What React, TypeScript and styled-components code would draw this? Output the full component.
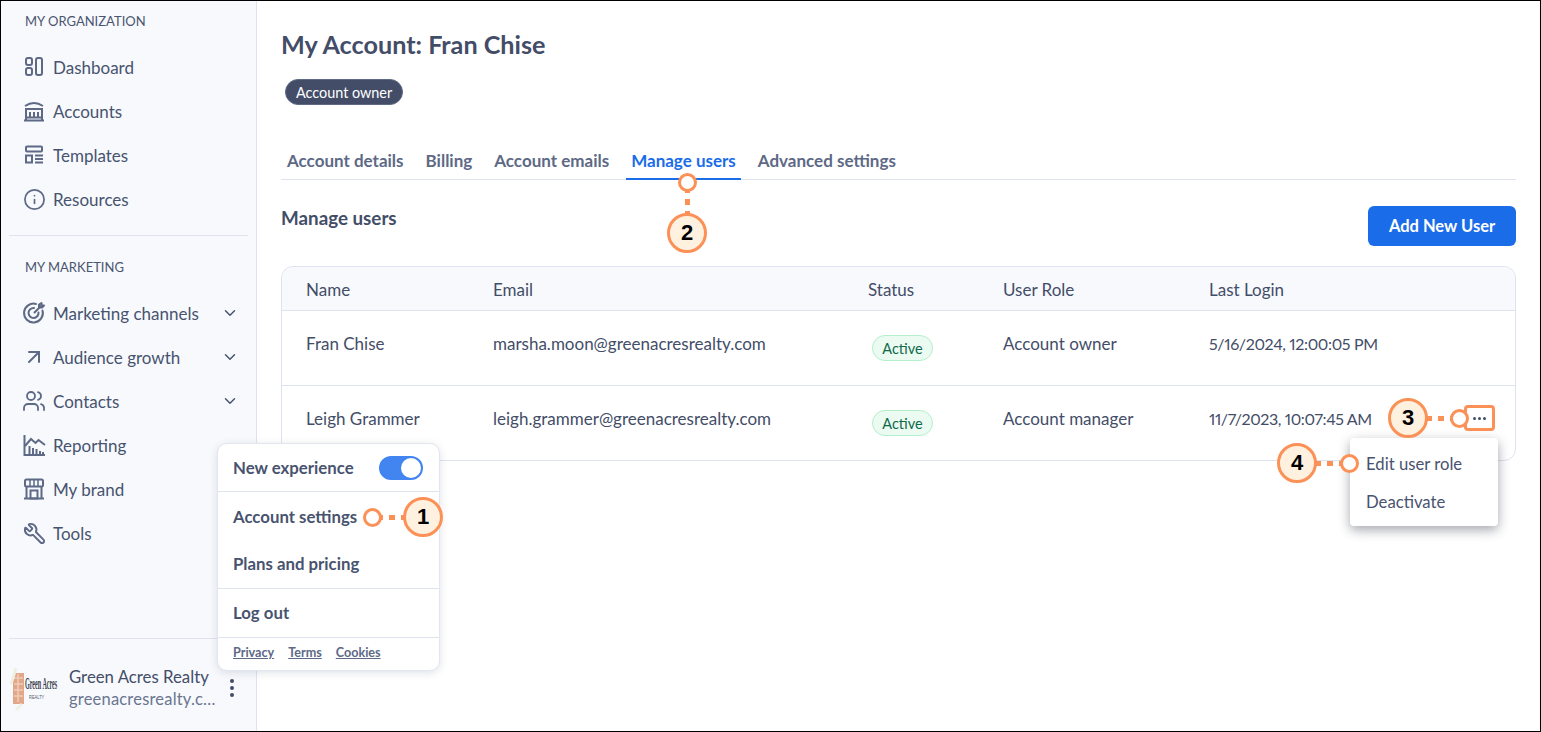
import styled, { createGlobalStyle } from "styled-components";
import { ArrowUpRight, ChevronDown, Info, Users, Wrench } from "lucide-react";
import type { ReactNode } from "react";

const GlobalStyle = createGlobalStyle`
  * { box-sizing: border-box; }
  html, body { margin: 0; padding: 0; background: #fff; }
  body { font-family: "Lato", "Open Sans", sans-serif; color: #434d68; }
`;

const Page = styled.div`
  position: relative;
  display: flex;
  width: 1541px;
  height: 732px;
  border: 1px solid #000;
  overflow: hidden;
  background: #fff;
`;

/* sidebar */
const Sidebar = styled.aside`
  display: flex;
  flex-direction: column;
  flex: 0 0 256px;
  background: #f7f9fd;
  border-right: 1px solid #dfe3ef;
`;

const SectionLabel = styled.div<{ $top: number }>`
  padding: ${(p) => p.$top}px 0 0 24px;
  height: ${(p) => p.$top + 18}px;
  margin-bottom: 15px;
  font-size: 13px;
  line-height: 18px;
  color: #4a5570;
`;

const NavList = styled.nav`
  display: flex;
  flex-direction: column;
`;

const NavItem = styled.div`
  display: flex;
  align-items: center;
  height: 44px;
  padding: 0 16px 0 21px;
  font-size: 17px;
  color: #48536f;
`;

const NavIcon = styled.span`
  display: flex;
  align-items: center;
  justify-content: center;
  width: 24px;
  height: 24px;
  margin-right: 7px;
  color: #5d6985;
`;

const NavText = styled.span`
  flex: 1;
`;

const NavChevron = styled(ChevronDown)`
  width: 18px;
  height: 18px;
  margin-right: 1px;
  color: #48536f;
`;

const ToolsWrench = styled(Wrench)`
  transform: scaleX(-1);
`;

const SideDivider = styled.hr`
  margin: 14px 8px 0 8px;
  border: 0;
  border-top: 1px solid #dfe3ef;
`;

const SideFooter = styled.div`
  display: flex;
  align-items: center;
  margin: auto 8px 0 8px;
  height: 93px;
  padding: 6px 0 0 1px;
  border-top: 1px solid #dfe3ef;
`;

const BrandLogo = styled.svg`
  flex: 0 0 48px;
  width: 48px;
  height: 48px;
`;

const BrandText = styled.div`
  margin-left: 11px;
  width: 149px;
  min-width: 0;
`;

const BrandName = styled.div`
  font-size: 16.8px;
  line-height: 23px;
  color: #434d68;
  white-space: nowrap;
`;

const BrandSite = styled.div`
  font-size: 16.5px;
  line-height: 23px;
  letter-spacing: 0.2px;
  color: #6a7590;
  white-space: nowrap;
  overflow: hidden;
  text-overflow: ellipsis;
`;

const Kebab = styled.span`
  display: flex;
  flex-direction: column;
  gap: 3px;
  margin-left: 12px;
  span {
    width: 4px;
    height: 4px;
    border-radius: 50%;
    background: #434d68;
  }
`;

/* main column */
const Main = styled.main`
  flex: 1;
  min-width: 0;
  padding: 0 24px;
`;

const Title = styled.h1`
  margin: 27px 0 0 0;
  font-size: 25.2px;
  line-height: 32px;
  font-weight: 700;
  color: #434d68;
`;

const OwnerPill = styled.div`
  display: inline-flex;
  align-items: center;
  height: 26px;
  margin: 19px 0 0 4px;
  padding: 0 10px;
  border-radius: 13px;
  background: #434d68;
  border: 1px solid #5d6985;
  color: #fff;
  font-size: 14.4px;
`;

const Tabs = styled.div`
  display: flex;
  gap: 12px;
  height: 36px;
  margin-top: 39px;
  padding-left: 1px;
  border-bottom: 1px solid #dfe3ef;
`;

const Tab = styled.div<{ $active?: boolean }>`
  height: 36px;
  padding: 5px 5px 0 5px;
  font-size: 17px;
  line-height: 24px;
  font-weight: 700;
  white-space: nowrap;
  color: ${(p) => (p.$active ? "#1a6ce8" : "#5d6985")};
  border-bottom: 2px solid ${(p) => (p.$active ? "#1a6ce8" : "transparent")};
`;

const SectionHead = styled.div`
  display: flex;
  justify-content: space-between;
  align-items: flex-start;
  margin-top: 26px;
  height: 60px;
`;

const SectionTitle = styled.h2`
  margin: 0;
  font-size: 18.8px;
  line-height: 24px;
  font-weight: 700;
  color: #434d68;
`;

const PrimaryButton = styled.button`
  width: 148px;
  height: 40px;
  border: 0;
  border-radius: 6px;
  background: #1a6ce8;
  color: #fff;
  font-family: inherit;
  font-size: 16.5px;
  font-weight: 700;
`;

const TableCard = styled.div`
  height: 195px;
  border: 1px solid #dfe3ef;
  border-radius: 12px;
`;

const TableRow = styled.div<{ $head?: boolean }>`
  display: grid;
  grid-template-columns: 187px 375px 135px 206px 1fr;
  align-items: center;
  height: ${(p) => (p.$head ? "44px" : "75px")};
  padding-left: 24px;
  border-bottom: 1px solid #dfe3ef;
  background: ${(p) => (p.$head ? "#f7f9fd" : "transparent")};
  border-radius: ${(p) => (p.$head ? "12px 12px 0 0" : "0")};
  &:last-child { border-bottom: 0; height: 74px; }
`;

const HeadCell = styled.div`
  padding-top: 1px;
  font-size: 17px;
  color: #434d68;
`;

const Cell = styled.div`
  padding-bottom: 10px;
  font-size: 17px;
  color: #434d68;
  white-space: nowrap;
`;

const StatusCell = styled.div`
  padding-left: 4px;
`;

const StatusBadge = styled.span`
  display: inline-flex;
  align-items: center;
  justify-content: center;
  width: 61px;
  height: 26px;
  border-radius: 13px;
  background: #ecfbf2;
  border: 1px solid #b3efcb;
  color: #0f6a4a;
  font-size: 14.5px;
`;

const DateCell = styled(Cell)<{ $track: number }>`
  font-size: 16px;
  font-feature-settings: "pnum" 1;
  letter-spacing: ${(p) => p.$track}px;
`;

const LoginCell = styled(DateCell)`
  display: flex;
  align-items: center;
  justify-content: space-between;
  padding-right: 20px;
`;

const ActionAnchor = styled.div`
  position: relative;
  width: 31px;
  height: 26px;
`;

const MoreButton = styled.div`
  display: flex;
  align-items: center;
  justify-content: center;
  gap: 2px;
  width: 31px;
  height: 26px;
  border: 3px solid #fb9157;
  border-radius: 4px;
  background: #fff;
  span {
    width: 3px;
    height: 3px;
    border-radius: 50%;
    background: #434d68;
  }
`;

const RowMenu = styled.div`
  position: absolute;
  top: 33px;
  right: -3px;
  width: 148px;
  height: 88px;
  padding: 7px 0 0 16px;
  border-radius: 4px;
  background: #fff;
  box-shadow: 0 4px 12px rgba(30, 35, 50, 0.4);
  letter-spacing: 0;
`;

const RowMenuItem = styled.div`
  height: 38px;
  line-height: 38px;
  font-size: 16.7px;
  color: #48536f;
`;

/* account popover */
const Popover = styled.div`
  position: absolute;
  left: 216px;
  top: 442px;
  width: 223px;
  height: 228px;
  border: 1px solid #e3e6f0;
  border-radius: 10px;
  background: #fff;
  box-shadow: 0 2px 8px rgba(50, 60, 90, 0.15);
`;

const PopRow = styled.div<{ $h: number; $line?: boolean; $lift?: boolean }>`
  display: flex;
  align-items: center;
  justify-content: space-between;
  height: ${(p) => p.$h}px;
  padding: 0 16px ${(p) => (p.$lift ? "2px" : "0")} 15px;
  font-size: 16.8px;
  font-weight: 700;
  color: #48536f;
  border-bottom: ${(p) => (p.$line ? "1px solid #dfe3ef" : "0")};
`;

const Toggle = styled.span`
  display: flex;
  justify-content: flex-end;
  align-items: center;
  width: 44px;
  height: 24px;
  padding: 2px;
  border-radius: 12px;
  background: #4285f0;
  &::after {
    content: "";
    width: 20px;
    height: 20px;
    border-radius: 50%;
    background: #fff;
  }
`;

const PopLinks = styled.div`
  display: flex;
  gap: 14px;
  padding: 7px 15px 0;
  font-size: 12.6px;
  font-weight: 700;
  color: #5d6985;
  span { text-decoration: underline; }
`;

/* numbered callouts laid over the screenshot */
const Badge = styled.div<{ $x: number; $y: number }>`
  position: absolute;
  left: ${(p) => p.$x - 21}px;
  top: ${(p) => p.$y - 21}px;
  display: flex;
  align-items: center;
  justify-content: center;
  width: 40px;
  height: 40px;
  border: 3px solid #fb9157;
  border-radius: 50%;
  background: #fff1df;
  color: #000;
  font-family: "Liberation Sans", sans-serif;
  font-size: 22px;
  font-weight: 700;
  z-index: 5;
`;

const Ring = styled.div<{ $x: number; $y: number }>`
  position: absolute;
  left: ${(p) => p.$x - 10}px;
  top: ${(p) => p.$y - 10}px;
  width: 19px;
  height: 19px;
  border: 3px solid #fb9157;
  border-radius: 50%;
  background: #fff;
  z-index: 5;
`;

const DotsH = styled.div<{ $x: number; $y: number }>`
  position: absolute;
  left: ${(p) => p.$x - 1}px;
  top: ${(p) => p.$y - 3}px;
  width: 28px;
  height: 5px;
  background: repeating-linear-gradient(to right, #fb9157 0 6px, transparent 6px 12px);
  z-index: 4;
`;

const DotsV = styled.div<{ $x: number; $y: number }>`
  position: absolute;
  left: ${(p) => p.$x - 3}px;
  top: ${(p) => p.$y - 1}px;
  width: 5px;
  height: 28px;
  background: repeating-linear-gradient(to bottom, #fb9157 0 6px, transparent 6px 12px);
  z-index: 4;
`;

const iconStroke = { fill: "none", stroke: "currentColor", strokeWidth: 2, strokeLinecap: "round", strokeLinejoin: "round" } as const;

const DashboardIcon = () => (
  <svg width="20" height="20" viewBox="0 0 20 20" {...iconStroke}>
    <rect x="2" y="1" width="6" height="7" rx="2" />
    <rect x="2" y="11" width="6" height="7" rx="2" />
    <rect x="12" y="1" width="6" height="17" rx="2" />
  </svg>
);

const BankIcon = () => (
  <svg width="22" height="22" viewBox="0 0 22 22" {...iconStroke} strokeLinecap="butt" strokeLinejoin="miter">
    <path d="M2 6 Q11 0 20 6" />
    <path d="M2 9h18M3 20V9M19 20V9M1 20.5h20" />
    <path d="M7 12v5M11 12v5M15 12v5M4 17.5h14" />
  </svg>
);

const TemplatesIcon = () => (
  <svg width="20" height="20" viewBox="0 0 20 20" {...iconStroke} strokeLinecap="butt" strokeLinejoin="miter">
    <rect x="2" y="1.5" width="16" height="5" rx="1" />
    <rect x="2" y="10.5" width="6" height="7" />
    <path d="M11 10.5h8M11 14h8M11 17.5h8" />
  </svg>
);

const TargetIcon = () => (
  <svg width="24" height="24" viewBox="0 0 24 24" {...iconStroke}>
    <path d="M20.5 9.5A9.4 9.4 0 1 1 14 3" />
    <path d="M16.5 11.5A5 5 0 1 1 12 7" />
    <path d="M12.5 11.5 19 5M17 3.5V6.5H20L22 4.5H19.5V2Z" />
  </svg>
);

const ReportingIcon = () => (
  <svg width="24" height="24" viewBox="0 0 24 24" {...iconStroke} strokeLinecap="butt" strokeLinejoin="miter">
    <path d="M2.5 2v20H23" />
    <path d="M3 13 9 6l4.5 4 3-3 6.500 5" />
    <path d="M7.500 21v-8M11 21v-6M14.500 21v-5M18 21v-3M21 21v-2" />
  </svg>
);

const BrandIcon = () => (
  <svg width="22" height="22" viewBox="0 0 22 22" {...iconStroke} strokeLinecap="butt" strokeLinejoin="miter">
    <rect x="2" y="1.5" width="18" height="7" rx="1.5" />
    <path d="M7 2v6M11 2v6M15 2v6" strokeWidth="1.500" />
    <path d="M3.500 9v11.500M18.500 9v11.500M1 20.500h20" />
    <rect x="7.500" y="12.500" width="7" height="8" />
  </svg>
);

const BrandMark = () => (
  <BrandLogo viewBox="0 0 48 48">
    <rect x="3" y="9" width="11" height="31" fill="#e2a68a" />
    <path d="M4 14h9M4 20h9M4 26h9M4 32h9M8 10v28" stroke="#f1cdb8" strokeWidth="1.500" />
    <path d="M1 20 6 4M6 46l6-6" stroke="#eef0e4" strokeWidth="3" />
    <g transform="translate(15 25) scale(0.36 1)">
      <text fontFamily="Liberation Serif" fontWeight="700" fontSize="17" fill="#3c3f50">Green Acres</text>
    </g>
    <g transform="translate(19 35) scale(0.8 1)">
      <text fontFamily="Liberation Sans" fontSize="5" fill="#55586a">REALTY</text>
    </g>
  </BrandLogo>
);

type NavEntry = { label: string; icon: ReactNode; chevron?: boolean };

const orgNav: NavEntry[] = [
  { label: "Dashboard", icon: <DashboardIcon /> },
  { label: "Accounts", icon: <BankIcon /> },
  { label: "Templates", icon: <TemplatesIcon /> },
  { label: "Resources", icon: <Info size={23} strokeWidth={1.8} /> },
];

const marketingNav: NavEntry[] = [
  { label: "Marketing channels", icon: <TargetIcon />, chevron: true },
  { label: "Audience growth", icon: <ArrowUpRight size={24} strokeWidth={2} />, chevron: true },
  { label: "Contacts", icon: <Users size={24} strokeWidth={1.8} />, chevron: true },
  { label: "Reporting", icon: <ReportingIcon /> },
  { label: "My brand", icon: <BrandIcon /> },
  { label: "Tools", icon: <ToolsWrench size={23} strokeWidth={2} /> },
];

const NavGroup = ({ items }: { items: NavEntry[] }) => (
  <NavList>
    {items.map((item) => (
      <NavItem key={item.label}>
        <NavIcon>{item.icon}</NavIcon>
        <NavText>{item.label}</NavText>
        {item.chevron && <NavChevron strokeWidth={2} />}
      </NavItem>
    ))}
  </NavList>
);

export default function App() {
  return (
    <>
      <GlobalStyle />
      <Page>
        <Sidebar>
          <SectionLabel $top={11}>MY ORGANIZATION</SectionLabel>
          <NavGroup items={orgNav} />
          <SideDivider />
          <SectionLabel $top={22}>MY MARKETING</SectionLabel>
          <NavGroup items={marketingNav} />
          <SideFooter>
            <BrandMark />
            <BrandText>
              <BrandName>Green Acres Realty</BrandName>
              <BrandSite>greenacresrealty.com</BrandSite>
            </BrandText>
            <Kebab>
              <span />
              <span />
              <span />
            </Kebab>
          </SideFooter>
        </Sidebar>

        <Main>
          <Title>My Account: Fran Chise</Title>
          <OwnerPill>Account owner</OwnerPill>
          <Tabs>
            <Tab>Account details</Tab>
            <Tab>Billing</Tab>
            <Tab>Account emails</Tab>
            <Tab $active>Manage users</Tab>
            <Tab>Advanced settings</Tab>
          </Tabs>
          <SectionHead>
            <SectionTitle>Manage users</SectionTitle>
            <PrimaryButton>Add New User</PrimaryButton>
          </SectionHead>
          <TableCard>
            <TableRow $head>
              <HeadCell>Name</HeadCell>
              <HeadCell>Email</HeadCell>
              <HeadCell>Status</HeadCell>
              <HeadCell>User Role</HeadCell>
              <HeadCell>Last Login</HeadCell>
            </TableRow>
            <TableRow>
              <Cell>Fran Chise</Cell>
              <Cell>marsha.moon@greenacresrealty.com</Cell>
              <StatusCell><StatusBadge>Active</StatusBadge></StatusCell>
              <Cell>Account owner</Cell>
              <DateCell $track={-0.36}>5/16/2024, 12:00:05 PM</DateCell>
            </TableRow>
            <TableRow>
              <Cell>Leigh Grammer</Cell>
              <Cell>leigh.grammer@greenacresrealty.com</Cell>
              <StatusCell><StatusBadge>Active</StatusBadge></StatusCell>
              <Cell>Account manager</Cell>
              <LoginCell $track={-0.4}>
                11/7/2023, 10:07:45 AM
                <ActionAnchor>
                  <MoreButton>
                    <span />
                    <span />
                    <span />
                  </MoreButton>
                  <RowMenu>
                    <RowMenuItem>Edit user role</RowMenuItem>
                    <RowMenuItem>Deactivate</RowMenuItem>
                  </RowMenu>
                </ActionAnchor>
              </LoginCell>
            </TableRow>
          </TableCard>
        </Main>

        <Popover>
          <PopRow $h={48} $line>New experience<Toggle /></PopRow>
          <PopRow $h={49}>Account settings</PopRow>
          <PopRow $h={48} $line $lift>Plans and pricing</PopRow>
          <PopRow $h={49} $line $lift>Log out</PopRow>
          <PopLinks>
            <span>Privacy</span>
            <span>Terms</span>
            <span>Cookies</span>
          </PopLinks>
        </Popover>

        <Ring $x={372} $y={517} />
        <DotsH $x={377} $y={517} />
        <Badge $x={423} $y={517}>1</Badge>

        <Ring $x={687} $y={182} />
        <DotsV $x={687} $y={187} />
        <Badge $x={687} $y={233}>2</Badge>

        <Badge $x={1408} $y={418}>3</Badge>
        <DotsH $x={1426} $y={418} />
        <Ring $x={1459} $y={418} />

        <Badge $x={1297} $y={463}>4</Badge>
        <DotsH $x={1315} $y={463} />
        <Ring $x={1349} $y={463} />
      </Page>
    </>
  );
}
